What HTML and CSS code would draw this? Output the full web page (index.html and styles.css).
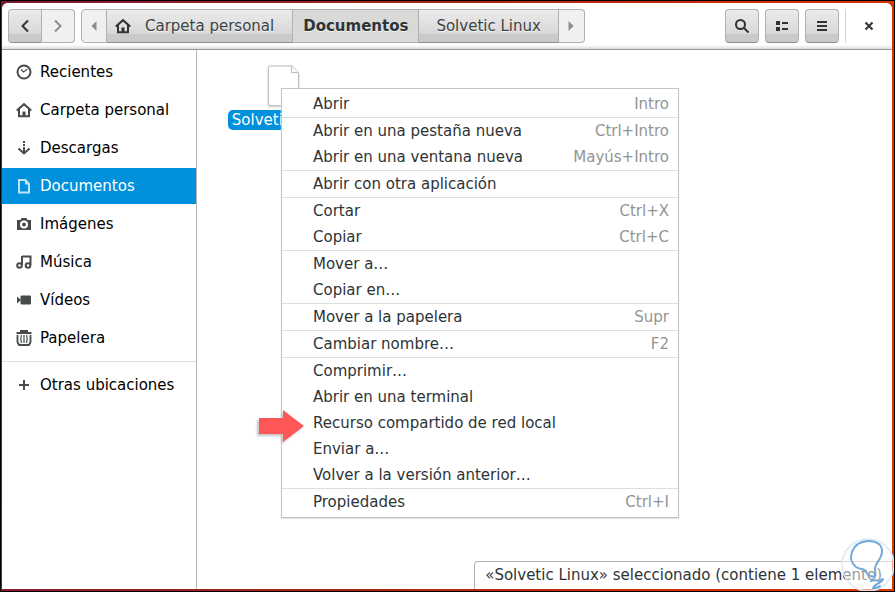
FILE: index.html
```html
<!DOCTYPE html>
<html lang="es">
<head>
<meta charset="utf-8">
<title>Documentos</title>
<link rel="stylesheet" href="styles.css">
</head>
<body>
<svg class="defs" aria-hidden="true">
  <symbol id="home" viewBox="0 0 16 16"><path d="M.8 8.6 8 2.2l7.200 6.400M3 7v7.200h10V7" fill="none" stroke="currentColor" stroke-width="2"/><path d="M6.500 9.500h3V15h-3z" fill="currentColor"/></symbol>
</svg>
<div class="desktop">
<div class="window">
  <header class="toolbar">
    <div class="group">
      <button class="btn nav" aria-label="Atrás"><svg viewBox="0 0 16 16"><path d="M11 2.500 5.500 8l5.500 5.500" class="line"/></svg></button>
      <button class="btn nav off" aria-label="Adelante" disabled><svg viewBox="0 0 16 16"><path d="M5 2.500 10.500 8 5 13.500" class="line"/></svg></button>
    </div>
    <nav class="group" aria-label="Ruta">
      <button class="btn step off" aria-label="Anterior"><svg viewBox="0 0 16 16"><path d="M10.500 3v10L5.500 8z" fill="currentColor"/></svg></button>
      <button class="btn crumb"><svg viewBox="0 0 16 16"><use href="#home"/></svg><span class="home-label">Carpeta personal</span></button>
      <button class="btn crumb current" aria-current="page">Documentos</button>
      <button class="btn crumb last">Solvetic Linux</button>
      <button class="btn step off" aria-label="Siguiente"><svg viewBox="0 0 16 16"><path d="M5.500 3v10l5-5z" fill="currentColor"/></svg></button>
    </nav>
    <div class="actions">
      <button class="btn tool" aria-label="Buscar"><svg viewBox="0 0 16 16"><circle cx="6.500" cy="6.500" r="4.500" class="line"/><path d="m10 10 4.500 4.500" class="line"/></svg></button>
      <button class="btn tool" aria-label="Ver como lista"><svg viewBox="0 0 16 16"><path d="M2 3h4v4H2zM2 9h4v4H2zM8 4h6v2H8zM8 10h6v2H8z" fill="currentColor"/></svg></button>
      <button class="btn tool" aria-label="Menú"><svg viewBox="0 0 16 16"><path d="M3 3h10v2H3zM3 7h10v2H3zM3 11h10v2H3z" fill="currentColor"/></svg></button>
      <button class="close" aria-label="Cerrar"><svg viewBox="0 0 16 16"><path d="m4.500 4.500 7 7m0-7-7 7" class="line"/></svg></button>
    </div>
  </header>
  <div class="main">
    <nav class="sidebar" aria-label="Lugares">
      <a class="place" href="#"><svg viewBox="0 0 16 16"><circle cx="8" cy="8" r="6.500" fill="none" stroke="currentColor" stroke-width="2"/><path d="M5 5.500 7.500 8 11.500 5" fill="none" stroke="currentColor" stroke-width="1.200"/></svg>Recientes</a>
      <a class="place" href="#"><svg viewBox="0 0 16 16"><use href="#home"/></svg>Carpeta personal</a>
      <a class="place" href="#"><svg viewBox="0 0 16 16"><path d="M7 1h2v2H7zM7 4h2v2H7zM7 7h2v5H7z" fill="currentColor"/><path d="m2.500 8.500 5.500 5 5.500-5" class="line"/></svg>Descargas</a>
      <a class="place selected" href="#" aria-current="page"><svg viewBox="0 0 16 16"><path d="M3 2h6.500L13 6v8.500H3z" class="line"/><path d="M9 2v4.500h4.500z" fill="currentColor"/></svg>Documentos</a>
      <a class="place" href="#"><svg viewBox="0 0 16 16"><path fill-rule="evenodd" d="M1 4h3.500l1-2h5l1 2H15v10H1zM8 4.500a4 4 0 1 0 0 8 4 4 0 0 0 0-8zm0 2a2 2 0 1 1 0 4 2 2 0 0 1 0-4z" fill="currentColor"/></svg>Imágenes</a>
      <a class="place" href="#"><svg viewBox="0 0 16 16"><circle cx="3.500" cy="11.500" r="2.300" class="line"/><circle cx="12" cy="11.500" r="2.300" class="line"/><path d="M6 11V7.500M6 2.500h8.500V11M6 2v6" class="line"/></svg>Música</a>
      <a class="place" href="#"><svg viewBox="0 0 16 16"><path d="M1 4.500 5 8l-4 3.500z" fill="currentColor"/><rect x="4.500" y="3.500" width="10.500" height="9" rx="1" fill="currentColor"/></svg>Vídeos</a>
      <a class="place" href="#"><svg viewBox="0 0 16 16"><path d="M.5 3h15M4 1h8M1.500 5v7l1.500 3h10l1.500-3V5" fill="none" stroke="currentColor" stroke-width="1.800"/><path d="M5.500 5q-1.500 4 0 8M8 5v8M10.500 5q1.500 4 0 8" fill="none" stroke="currentColor" stroke-width="1.200"/></svg>Papelera</a>
      <hr>
      <a class="place" href="#"><svg viewBox="0 0 16 16"><path d="M8 3v10M3 8h10" class="line"/></svg>Otras ubicaciones</a>
    </nav>
    <main class="canvas">
      <div class="file">
        <svg class="sheet" viewBox="0 0 32 42"><path d="M2 1h22l6.500 6.500V39q0 1.500-1.500 1.500H2q-1.500 0-1.500-1.500V2.500Q.5 1 2 1z" fill="#fff" stroke="#bdbdbd"/><path d="M23.500 1v6.500h7" fill="#fff" stroke="#bdbdbd"/></svg>
        <span class="file-name">Solvetic Linux</span>
      </div>
      <div class="menu" role="menu">
        <button role="menuitem">Abrir<kbd>Intro</kbd></button>
        <hr>
        <button role="menuitem">Abrir en una pestaña nueva<kbd>Ctrl+Intro</kbd></button>
        <button role="menuitem">Abrir en una ventana nueva<kbd>Mayús+Intro</kbd></button>
        <hr>
        <button role="menuitem">Abrir con otra aplicación</button>
        <hr>
        <button role="menuitem">Cortar<kbd>Ctrl+X</kbd></button>
        <button role="menuitem">Copiar<kbd>Ctrl+C</kbd></button>
        <hr>
        <button role="menuitem">Mover a…</button>
        <button role="menuitem">Copiar en…</button>
        <hr>
        <button role="menuitem">Mover a la papelera<kbd>Supr</kbd></button>
        <hr>
        <button role="menuitem">Cambiar nombre…<kbd>F2</kbd></button>
        <hr>
        <button role="menuitem">Comprimir…</button>
        <button role="menuitem">Abrir en una terminal</button>
        <button role="menuitem">Recurso compartido de red local</button>
        <button role="menuitem">Enviar a…</button>
        <button role="menuitem">Volver a la versión anterior…</button>
        <hr>
        <button role="menuitem">Propiedades<kbd>Ctrl+I</kbd></button>
      </div>
      <svg class="arrow" viewBox="0 0 46 32" aria-hidden="true"><path d="M1 8h24V0l21 16-21 16v-8H1z" fill="#ff5757"/></svg>
      <div class="status">«Solvetic Linux» seleccionado (contiene 1 elemento)</div>
    </main>
  </div>
</div>
<svg class="bulb" viewBox="0 0 54 54" aria-hidden="true"><circle cx="27" cy="27" r="26" fill="#fff" fill-opacity=".5" stroke="#dfe9f5" stroke-width="1.500"/><path d="M34 38.500C29 39 26 37 25 33 23 30 19 32 15 29 10 25 9 19 11 14 14 6 21 3 28 3c8 0 13 4 13 10 0 9-7 11-7 18 0 3 1 5 0 7.500" fill="none" stroke="#70aadb" stroke-width="2" stroke-linecap="round" stroke-linejoin="round"/><path d="M30 43c4-2 8 1 12-2 0 4-8 4-10 9 3 0 5 0 7-2" fill="none" stroke="#70aadb" stroke-width="2" stroke-linecap="round" stroke-linejoin="round"/></svg>
</div>
</body>
</html>
```
FILE: styles.css
```css
* {
  box-sizing: border-box;
}

body {
  margin: 0;
  font: 15px/20px "DejaVu Sans", sans-serif;
  color: #2e3436;
}

button {
  font: inherit;
  color: inherit;
  margin: 0;
  padding: 0;
  border: 0;
  background: none;
}

svg {
  width: 16px;
  height: 16px;
  flex: none;
}

hr {
  margin: 0;
  border: 0;
  height: 1px;
  background: #dedede;
}

.defs {
  display: none;
}

.line {
  fill: none;
  stroke: currentColor;
  stroke-width: 2;
}

.desktop {
  position: relative;
  min-height: 100vh;
  display: flex;
  border: 1px solid #000;
  padding: 2px 2px 2px 1px;
  overflow: hidden;
  background: linear-gradient(100deg, #7a1b33, #b02714 50%, #e23704);
}

.window {
  flex: 1;
  display: flex;
  flex-direction: column;
  background: #fff;
  border-radius: 6px 6px 0 0;
  overflow: hidden;
}

.toolbar {
  display: flex;
  align-items: flex-start;
  gap: 6px;
  padding: 6px 6px 6px;
  border-bottom: 1px solid #999994;
  background: linear-gradient(to top, #dcdcdc, #fff 4px);
}

.group {
  display: flex;
}

.btn {
  height: 34px;
  display: flex;
  align-items: center;
  justify-content: center;
  border: 1px solid #b0b0ae;
  border-bottom-color: #8f8f8d;
  background: linear-gradient(#ebebeb, #d8d8d8 75%, #cacaca 75%);
  text-shadow: 0 1px #f4f4f4;
}

.group .btn + .btn {
  border-left: 0;
}

.group .btn:first-child {
  border-radius: 4px 0 0 4px;
}

.group .btn:last-child {
  border-radius: 0 4px 4px 0;
}

.nav {
  width: 34px;
}

.group .nav.off {
  width: 33px;
}

.step {
  width: 26px;
}

.group .off {
  background: #f0f0f0;
  border-color: #b0b0ae;
  color: #8b8e8f;
}

.crumb {
  padding: 0 18px 0 8px;
  color: #3c4143;
}

.crumb svg {
  color: #2e3436;
}

.home-label {
  margin-left: 14px;
}

.crumb.current {
  padding: 0 10px;
  background: #d9d9d7;
  border-color: #b0b0ae;
  color: #2e3436;
  font-weight: bold;
}

.crumb.last {
  padding: 0 17px;
}

.actions {
  display: flex;
  gap: 6px;
  margin-left: auto;
}

.tool {
  width: 34px;
  border-radius: 4px;
}

.close {
  width: 41px;
  height: 34px;
  display: flex;
  align-items: center;
  justify-content: center;
  padding-left: 6px;
  border-left: 1px solid #d5d5d5;
}

.main {
  flex: 1;
  display: flex;
}

.sidebar {
  width: 195px;
  display: flex;
  flex-direction: column;
  gap: 2px;
  padding-top: 4px;
  border-right: 1px solid #b6b6b3;
}

.place {
  display: flex;
  align-items: center;
  gap: 8px;
  height: 36px;
  padding: 0 14px;
  color: #000;
  text-decoration: none;
  white-space: nowrap;
}

.place svg {
  color: #474b4b;
}

.place.selected {
  background: #0090dc;
  color: #fff;
}

.place.selected svg {
  color: #bfe3f6;
}

.sidebar hr {
  margin: 3px 0;
}

.canvas {
  position: relative;
  flex: 1;
}

.file {
  width: 112px;
  margin: 15px 0 0 31px;
  display: flex;
  flex-direction: column;
  align-items: center;
  gap: 3px;
}

.sheet {
  width: 32px;
  height: 42px;
  filter: drop-shadow(0 1px 1px #ccc);
}

.file-name {
  padding: 0 4px;
  border-radius: 5px;
  background: #0090dc;
  color: #fff;
  white-space: nowrap;
}

.menu {
  position: absolute;
  left: 84px;
  top: 38px;
  width: 398px;
  padding: 2px 0;
  border: 1px solid #c3c3c3;
  background: #fff;
  box-shadow: 0 1px 1px #e4e4e4;
}

.menu button {
  display: flex;
  justify-content: space-between;
  align-items: center;
  width: 100%;
  height: 26px;
  padding: 0 9px 0 31px;
}

.menu kbd {
  font: inherit;
  color: #929595;
}

.arrow {
  position: absolute;
  left: 61px;
  top: 360px;
  width: 46px;
  height: 32px;
  filter: drop-shadow(-2px 2px 1px #c4c4c4);
}

.status {
  position: absolute;
  right: 0;
  bottom: 0;
  padding: 3px 10px 4px;
  border: 1px solid #b0b0ae;
  border-width: 1px 0 0 1px;
  border-radius: 4px 0 0 0;
  background: #fff;
}

.bulb {
  position: absolute;
  right: -1px;
  bottom: -1px;
  width: 54px;
  height: 54px;
}
```
